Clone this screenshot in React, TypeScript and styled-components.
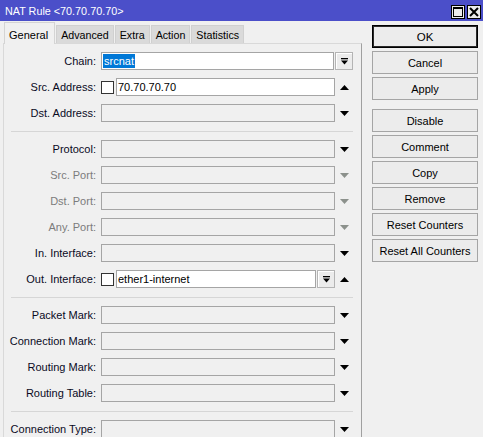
import React from 'react';
import styled, { createGlobalStyle } from 'styled-components';

const GlobalStyle = createGlobalStyle`
  html, body {
    margin: 0;
    padding: 0;
    background: #f0f0f0;
  }
  body {
    font-family: 'Liberation Sans', Arial, sans-serif;
    font-size: 11px;
    color: #000;
  }
`;

const Window = styled.div`
  width: 483px;
  height: 437px;
  overflow: hidden;
  background: #f0f0f0;
  display: flex;
  flex-direction: column;
`;

const TitleBar = styled.div`
  flex: none;
  height: 21px;
  background: #4b4fc9;
  color: #fff;
  font-size: 10.8px;
  display: flex;
  align-items: center;
  padding: 0 2px 0 5px;
`;

const TitleText = styled.div`
  flex: 1;
`;

const TitleButtons = styled.div`
  display: flex;
  gap: 2px;
  align-self: flex-end;
  margin-bottom: 2px;
`;

const TitleButton = styled.div`
  width: 14px;
  height: 14px;
  box-sizing: border-box;
  border: 1px solid #000;
  background: #ececec;
  display: flex;
  align-items: center;
  justify-content: center;
`;

const Body = styled.div`
  flex: 1;
  display: flex;
  padding-left: 3px;
`;

const TabsArea = styled.div`
  width: 359px;
  display: flex;
  flex-direction: column;
`;

const TabStrip = styled.div`
  height: 22px;
  display: flex;
  align-items: flex-end;
  padding-left: 1px;
`;

const Tab = styled.div<{ $active?: boolean }>`
  position: relative;
  z-index: ${(p) => (p.$active ? 2 : 1)};
  box-sizing: border-box;
  height: ${(p) => (p.$active ? '22px' : '18px')};
  margin-bottom: ${(p) => (p.$active ? '-1px' : '0')};
  margin-right: 1px;
  padding: ${(p) => (p.$active ? '2px 6px 0 4px' : '0 4px')};
  background: ${(p) => (p.$active ? '#f0f0f0' : '#dadada')};
  border: 1px solid ${(p) => (p.$active ? '#d4d4d4' : '#d0d0d0')};
  border-bottom: none;
  display: flex;
  align-items: center;
  font-size: ${(p) => (p.$active ? '11px' : '10.7px')};
  white-space: nowrap;
`;

const Panel = styled.div`
  flex: 1;
  border: 1px solid #d9d9d9;
  border-right-color: #a0a0a0;
  border-bottom: none;
  padding: 8px 8px 0 0;
  display: flex;
  flex-direction: column;
  gap: 8px;
`;

const Row = styled.div`
  height: 18px;
  display: flex;
  align-items: center;
`;

const Label = styled.div<{ $disabled?: boolean }>`
  width: 92px;
  padding-right: 5px;
  text-align: right;
  white-space: nowrap;
  color: ${(p) => (p.$disabled ? '#7c7c7c' : '#0a0a1e')};
`;

const Field = styled.div`
  width: 252px;
  height: 18px;
  display: flex;
  align-items: stretch;
`;

const TextBox = styled.div<{ $white?: boolean }>`
  flex: 1;
  box-sizing: border-box;
  border: 1px solid #a5a5a5;
  background: ${(p) => (p.$white ? '#fff' : 'transparent')};
  display: flex;
  align-items: center;
  padding-left: 1px;
  white-space: nowrap;
  overflow: hidden;
`;

const Selected = styled.span`
  background: #0078d7;
  color: #fff;
  padding: 1px 1px;
`;

const Check = styled.div`
  align-self: center;
  width: 13px;
  height: 13px;
  box-sizing: border-box;
  border: 1px solid #333;
  background: #fff;
  margin-right: 2px;
`;

const DropButton = styled.div`
  width: 18px;
  flex: none;
  box-sizing: border-box;
  border: 1px solid #b4b4b4;
  background: #ececec;
  box-shadow: inset 1px 1px 0 #fff;
  margin-left: 1px;
  display: flex;
  align-items: center;
  justify-content: center;
`;

const ArrowCell = styled.div<{ $disabled?: boolean }>`
  width: 18px;
  flex: none;
  display: flex;
  align-items: center;
  justify-content: center;
  color: ${(p) => (p.$disabled ? '#8c918c' : '#000')};
`;

const Separator = styled.div`
  margin: 1px 0 0 7px;
  width: 342px;
  height: 1px;
  background: #d6d6d6;
`;

const ButtonColumn = styled.div`
  margin-left: 10px;
  padding-top: 4px;
  width: 106px;
  display: flex;
  flex-direction: column;
  gap: 3px;
`;

const Button = styled.div<{ $default?: boolean; $spaced?: boolean }>`
  height: 23px;
  box-sizing: border-box;
  border: 1px solid ${(p) => (p.$default ? '#000' : '#a5a5a5')};
  box-shadow: ${(p) => (p.$default ? 'inset 0 0 0 1px #2a2a2a' : 'none')};
  background: #ececec;
  display: flex;
  align-items: center;
  justify-content: center;
  white-space: nowrap;
  margin-top: ${(p) => (p.$spaced ? '6px' : '0')};
  font-size: ${(p) => (p.$default ? '11.5px' : '11px')};
`;

const ArrowDown = () => (
  <svg width="9" height="5" viewBox="0 0 9 5">
    <path d="M0 0H9L4.5 5Z" fill="currentColor" />
  </svg>
);

const ArrowUp = () => (
  <svg width="9" height="5" viewBox="0 0 9 5">
    <path d="M0 5H9L4.5 0Z" fill="currentColor" />
  </svg>
);

const DropIcon = () => (
  <svg width="7" height="7" viewBox="0 0 7 7">
    <rect x="0" y="0" width="7" height="1.3" fill="#000" />
    <path d="M0 2.5H7L3.5 6.5Z" fill="#000" />
  </svg>
);

type FieldRow = {
  label: string;
  disabled?: boolean;
  check?: boolean;
  value?: React.ReactNode;
  white?: boolean;
  drop?: boolean;
  arrow?: 'up' | 'down';
};

type Section = FieldRow[];

const sections: Section[] = [
  [
    { label: 'Chain:', white: true, value: <Selected>srcnat</Selected>, drop: true },
    { label: 'Src. Address:', check: true, white: true, value: '70.70.70.70', arrow: 'up' },
    { label: 'Dst. Address:', arrow: 'down' },
  ],
  [
    { label: 'Protocol:', arrow: 'down' },
    { label: 'Src. Port:', disabled: true, arrow: 'down' },
    { label: 'Dst. Port:', disabled: true, arrow: 'down' },
    { label: 'Any. Port:', disabled: true, arrow: 'down' },
    { label: 'In. Interface:', arrow: 'down' },
    { label: 'Out. Interface:', check: true, white: true, value: 'ether1-internet', drop: true, arrow: 'up' },
  ],
  [
    { label: 'Packet Mark:', arrow: 'down' },
    { label: 'Connection Mark:', arrow: 'down' },
    { label: 'Routing Mark:', arrow: 'down' },
    { label: 'Routing Table:', arrow: 'down' },
  ],
  [{ label: 'Connection Type:', arrow: 'down' }],
];

const tabs = ['General', 'Advanced', 'Extra', 'Action', 'Statistics'];

const buttons = [
  { text: 'OK', def: true },
  { text: 'Cancel' },
  { text: 'Apply' },
  { text: 'Disable', spaced: true },
  { text: 'Comment' },
  { text: 'Copy' },
  { text: 'Remove' },
  { text: 'Reset Counters' },
  { text: 'Reset All Counters' },
];

const renderRow = (r: FieldRow) => (
  <Row key={r.label}>
    <Label $disabled={r.disabled}>{r.label}</Label>
    <Field>
      {r.check && <Check />}
      <TextBox $white={r.white}>{r.value}</TextBox>
      {r.drop && (
        <DropButton>
          <DropIcon />
        </DropButton>
      )}
      {r.arrow && (
        <ArrowCell $disabled={r.disabled}>{r.arrow === 'up' ? <ArrowUp /> : <ArrowDown />}</ArrowCell>
      )}
    </Field>
  </Row>
);

export default function App() {
  return (
    <>
      <GlobalStyle />
      <Window>
        <TitleBar>
          <TitleText>NAT Rule &lt;70.70.70.70&gt;</TitleText>
          <TitleButtons>
            <TitleButton>
              <svg width="10" height="10" viewBox="0 0 10 10">
                <rect x="0.5" y="0.5" width="9" height="9" fill="none" stroke="#000" />
                <rect x="0" y="0" width="10" height="2" fill="#000" />
              </svg>
            </TitleButton>
            <TitleButton>
              <svg width="10" height="10" viewBox="0 0 10 10">
                <path d="M1 1L9 9M9 1L1 9" stroke="#000" strokeWidth="2" />
              </svg>
            </TitleButton>
          </TitleButtons>
        </TitleBar>
        <Body>
          <TabsArea>
            <TabStrip>
              {tabs.map((t, i) => (
                <Tab key={t} $active={i === 0}>
                  {t}
                </Tab>
              ))}
            </TabStrip>
            <Panel>
              {sections.map((s, i) => (
                <React.Fragment key={i}>
                  {i > 0 && <Separator />}
                  {s.map(renderRow)}
                </React.Fragment>
              ))}
            </Panel>
          </TabsArea>
          <ButtonColumn>
            {buttons.map((b) => (
              <Button key={b.text} $default={b.def} $spaced={b.spaced}>
                {b.text}
              </Button>
            ))}
          </ButtonColumn>
        </Body>
      </Window>
    </>
  );
}
